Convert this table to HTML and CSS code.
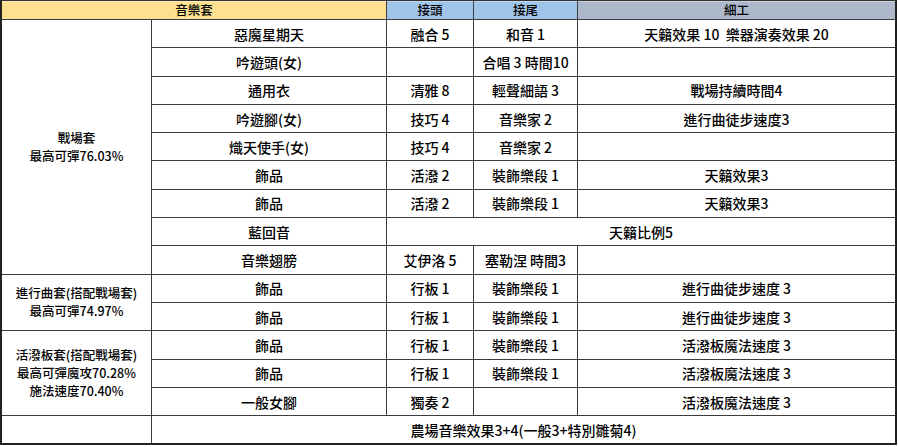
FILE: index.html
```html
<!DOCTYPE html>
<html lang="zh-Hant">
<head>
<meta charset="utf-8">
<title>音樂套</title>
<link rel="stylesheet" href="styles.css">
</head>
<body>
<table class="sheet">
  <colgroup>
    <col class="c1"><col class="c2"><col class="c3"><col class="c4"><col class="c5">
  </colgroup>
  <thead>
    <tr class="head">
      <th colspan="2" class="h-yellow">音樂套</th>
      <th class="h-blue">接頭</th>
      <th class="h-blue">接尾</th>
      <th class="h-grey last">細工</th>
    </tr>
  </thead>
  <tbody>
    <tr>
      <td rowspan="9" class="set">戰場套<br>最高可彈76.03%</td>
      <td>惡魔星期天</td><td>融合 5</td><td>和音 1</td><td class="last">天籟效果 10&nbsp; 樂器演奏效果 20</td>
    </tr>
    <tr><td>吟遊頭(女)</td><td></td><td class="wide">合唱 3 時間10</td><td class="last"></td></tr>
    <tr><td>通用衣</td><td>清雅 8</td><td>輕聲細語 3</td><td class="last">戰場持續時間4</td></tr>
    <tr><td>吟遊腳(女)</td><td>技巧 4</td><td>音樂家 2</td><td class="last">進行曲徒步速度3</td></tr>
    <tr><td>熾天使手(女)</td><td>技巧 4</td><td>音樂家 2</td><td class="last"></td></tr>
    <tr><td>飾品</td><td>活潑 2</td><td>裝飾樂段 1</td><td class="last">天籟效果3</td></tr>
    <tr><td>飾品</td><td>活潑 2</td><td>裝飾樂段 1</td><td class="last">天籟效果3</td></tr>
    <tr><td>藍回音</td><td colspan="3" class="last">天籟比例5</td></tr>
    <tr><td>音樂翅膀</td><td>艾伊洛 5</td><td>塞勒涅 時間3</td><td class="last"></td></tr>
    <tr>
      <td rowspan="2" class="set">進行曲套(搭配戰場套)<br>最高可彈74.97%</td>
      <td>飾品</td><td>行板 1</td><td>裝飾樂段 1</td><td class="last">進行曲徒步速度 3</td>
    </tr>
    <tr><td>飾品</td><td>行板 1</td><td>裝飾樂段 1</td><td class="last">進行曲徒步速度 3</td></tr>
    <tr>
      <td rowspan="3" class="set">活潑板套(搭配戰場套)<br>最高可彈魔攻70.28%<br>施法速度70.40%</td>
      <td>飾品</td><td>行板 1</td><td>裝飾樂段 1</td><td class="last">活潑板魔法速度 3</td>
    </tr>
    <tr><td>飾品</td><td>行板 1</td><td>裝飾樂段 1</td><td class="last">活潑板魔法速度 3</td></tr>
    <tr><td>一般女腳</td><td>獨奏 2</td><td></td><td class="last">活潑板魔法速度 3</td></tr>
    <tr class="final">
      <td class="set"></td>
      <td colspan="4" class="last">農場音樂效果3+4(一般3+特別雛菊4)</td>
    </tr>
  </tbody>
</table>
</body>
</html>
```
FILE: styles.css
```css
html, body {
  margin: 0;
  padding: 0;
  background: #ffffff;
}

body {
  width: 900px;
  height: 447px;
  overflow: hidden;
  font-family: "Noto Sans CJK TC", "Noto Sans", "Liberation Sans", sans-serif;
  color: #000;
}

.sheet {
  border-collapse: separate;
  border-spacing: 0;
  table-layout: fixed;
  width: 897px;
  border-left: 2px solid #222;
  border-top: 1px solid #333;
}

.c1 { width: 150px; }
.c2 { width: 235px; }
.c3 { width: 87px; }
.c4 { width: 104px; }
.c5 { width: 319px; }

.sheet th,
.sheet td {
  padding: 0;
  text-align: center;
  vertical-align: middle;
  border-right: 1px solid #3c3c3c;
  border-bottom: 1px solid #3c3c3c;
  white-space: nowrap;
  overflow: visible;
}

.sheet th {
  height: 18px;
  font-size: 12.5px;
  font-weight: 500;
  line-height: 14px;
  box-shadow: inset 0 1px 0 rgba(255, 255, 255, 0.35);
}

.h-yellow { background: #fee190; }
.h-blue { background: #a0c4e8; }
.h-grey { background: #adb9cb; }

.sheet td {
  height: 27.3px;
  font-size: 14px;
  font-weight: 500;
  line-height: 16px;
}

.sheet .last {
  border-right: 2px solid #222;
}

.sheet td.set {
  font-size: 12.5px;
  line-height: 18.2px;
}

.sheet td.wide {
  overflow: visible;
}

.final td {
  border-bottom: 2px solid #222;
}
```
